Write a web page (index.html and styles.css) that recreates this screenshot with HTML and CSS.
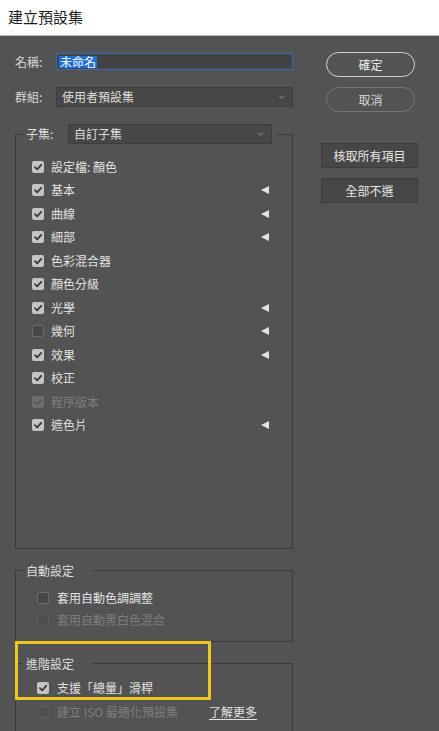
FILE: index.html
```html
<!DOCTYPE html>
<html lang="zh-Hant">
<head>
<meta charset="utf-8">
<title>建立預設集</title>
<link rel="stylesheet" href="styles.css">
</head>
<body>
<div class="titlebar">建立預設集</div>
<div class="main">
  <div class="left">
    <div class="field-row name-row">
      <span class="flabel">名稱:</span>
      <div class="input"><span class="sel">未命名</span></div>
    </div>
    <div class="field-row group-row">
      <span class="flabel">群組:</span>
      <div class="select"><span>使用者預設集</span><svg class="chev" viewBox="0 0 8 5" width="7" height="4"><path d="M1 1 L4 4 L7 1" fill="none" stroke="#a8a8a8" stroke-width="1.1"/></svg></div>
    </div>

    <fieldset class="box subset">
      <legend class="legend-sub"><div class="legend-inner"><span class="llabel">子集:</span><div class="select sub-select"><span>自訂子集</span><svg class="chev" viewBox="0 0 8 5" width="7" height="4"><path d="M1 1 L4 4 L7 1" fill="none" stroke="#a8a8a8" stroke-width="1.1"/></svg></div></div></legend>
      <ul class="items">
        <li class="item"><span class="cb on"><svg viewBox="0 0 12 12"><path d="M3 6.2 L5.2 8.3 L9.2 3.8"/></svg></span><span class="txt">設定檔: 顏色</span></li>
        <li class="item"><span class="cb on"><svg viewBox="0 0 12 12"><path d="M3 6.2 L5.2 8.3 L9.2 3.8"/></svg></span><span class="txt">基本</span><span class="tri"></span></li>
        <li class="item"><span class="cb on"><svg viewBox="0 0 12 12"><path d="M3 6.2 L5.2 8.3 L9.2 3.8"/></svg></span><span class="txt">曲線</span><span class="tri"></span></li>
        <li class="item"><span class="cb on"><svg viewBox="0 0 12 12"><path d="M3 6.2 L5.2 8.3 L9.2 3.8"/></svg></span><span class="txt">細部</span><span class="tri"></span></li>
        <li class="item"><span class="cb on"><svg viewBox="0 0 12 12"><path d="M3 6.2 L5.2 8.3 L9.2 3.8"/></svg></span><span class="txt">色彩混合器</span></li>
        <li class="item"><span class="cb on"><svg viewBox="0 0 12 12"><path d="M3 6.2 L5.2 8.3 L9.2 3.8"/></svg></span><span class="txt">顏色分級</span></li>
        <li class="item"><span class="cb on"><svg viewBox="0 0 12 12"><path d="M3 6.2 L5.2 8.3 L9.2 3.8"/></svg></span><span class="txt">光學</span><span class="tri"></span></li>
        <li class="item"><span class="cb off"></span><span class="txt">幾何</span><span class="tri"></span></li>
        <li class="item"><span class="cb on"><svg viewBox="0 0 12 12"><path d="M3 6.2 L5.2 8.3 L9.2 3.8"/></svg></span><span class="txt">效果</span><span class="tri"></span></li>
        <li class="item"><span class="cb on"><svg viewBox="0 0 12 12"><path d="M3 6.2 L5.2 8.3 L9.2 3.8"/></svg></span><span class="txt">校正</span></li>
        <li class="item disabled"><span class="cb on dis"><svg viewBox="0 0 12 12"><path d="M3 6.2 L5.2 8.3 L9.2 3.8"/></svg></span><span class="txt">程序版本</span></li>
        <li class="item"><span class="cb on"><svg viewBox="0 0 12 12"><path d="M3 6.2 L5.2 8.3 L9.2 3.8"/></svg></span><span class="txt">遮色片</span><span class="tri"></span></li>
      </ul>
    </fieldset>

    <fieldset class="box auto">
      <legend class="legend-text">自動設定</legend>
      <ul class="opts">
        <li class="opt"><span class="cb off"></span><span class="txt">套用自動色調調整</span></li>
        <li class="opt disabled"><span class="cb off dis"></span><span class="txt">套用自動黑白色混合</span></li>
      </ul>
    </fieldset>

    <div class="adv-wrap">
      <fieldset class="box adv">
        <legend class="legend-text">進階設定</legend>
        <ul class="opts adv-opts">
          <li class="opt"><span class="cb on"><svg viewBox="0 0 12 12"><path d="M3 6.2 L5.2 8.3 L9.2 3.8"/></svg></span><span class="txt">支援「總量」滑桿</span></li>
          <li class="opt"><span class="cb off dis"></span><span class="txt dis-txt">建立 ISO 最適化預設集</span><a class="learn" href="#">了解更多</a></li>
        </ul>
      </fieldset>
      <div class="highlight"></div>
    </div>
  </div>

  <div class="right">
    <button class="pill primary">確定</button>
    <button class="pill secondary">取消</button>
    <button class="rect first">核取所有項目</button>
    <button class="rect">全部不選</button>
  </div>
</div>
</body>
</html>
```

FILE: styles.css
```css
* { box-sizing: border-box; }

html, body {
  margin: 0;
  padding: 0;
}

body {
  width: 439px;
  height: 731px;
  overflow: hidden;
  background: #535353;
  font-family: "Noto Sans CJK TC", "Microsoft JhengHei", sans-serif;
  font-size: 12px;
  color: #e0e0e0;
}

.titlebar {
  height: 36px;
  background: #ffffff;
  border-bottom: 1px solid #b9b9b9;
  color: #1c1c1c;
  font-size: 15px;
  line-height: 34px;
  padding-left: 8px;
}

.main {
  display: flex;
  align-items: flex-start;
}

.left {
  width: 278px;
  margin-left: 15px;
  padding-top: 17px;
}

.field-row {
  display: flex;
  align-items: center;
}

.group-row {
  margin-top: 17px;
}

.flabel {
  width: 41px;
  color: #d8d8d8;
  line-height: 16px;
}

.input {
  width: 237px;
  height: 17px;
  background: #434343;
  border: 1px solid #2f6cbd;
  padding-left: 2px;
  display: flex;
  align-items: center;
}

.sel {
  background: #1f6fd6;
  color: #ffffff;
  line-height: 12px;
  height: 12px;
  padding: 0 1px;
  font-size: 12px;
}

.select {
  width: 237px;
  height: 20px;
  background: #474747;
  border: 1px solid #3c3c3c;
  display: flex;
  align-items: center;
  justify-content: space-between;
  padding: 0 7px 0 5px;
  color: #dedede;
  line-height: 16px;
}

.chev { display: block; }

/* fieldsets */
.box {
  margin: 0;
  min-width: 0;
  width: 278px;
  border: 1px solid #3a3a3a;
  padding: 0;
}

.subset {
  margin-top: 17px;
}

.legend-sub {
  margin-left: 7px;
  padding: 0 5px 0 3px;
}

.legend-inner {
  display: flex;
  align-items: center;
  height: 20px;
}

.llabel {
  width: 42px;
  color: #dedede;
  line-height: 16px;
}

.sub-select {
  width: 204px;
  padding-right: 7px;
}

.items {
  list-style: none;
  margin: 0;
  padding: 11px 23px 0 16px;
  height: 404px;
}

.item {
  display: flex;
  align-items: center;
  height: 23.5px;
}

.cb {
  width: 12px;
  height: 12px;
  border-radius: 2px;
  flex: none;
  display: block;
}

.cb svg {
  display: block;
  width: 12px;
  height: 12px;
}

.cb svg path {
  fill: none;
  stroke: #3a3a3a;
  stroke-width: 1.8;
  stroke-linecap: round;
  stroke-linejoin: round;
}

.cb.on {
  background: #c4c4c4;
}

.cb.on.dis {
  background: #6e6e6e;
}

.cb.on.dis svg path {
  stroke: #575757;
}

.cb.off {
  background: #474747;
  border: 1px solid #6c6c6c;
}

.cb.off.dis {
  background: #4f4f4f;
  border: 1px solid #5e5e5e;
}

.txt {
  line-height: 16px;
  color: #e2e2e2;
}

.item .txt {
  margin-left: 7px;
}

.item.disabled .txt,
.opt.disabled .txt,
.dis-txt {
  color: #7e7e7e !important;
}

.tri {
  margin-left: auto;
  width: 0;
  height: 0;
  border-top: 4.5px solid transparent;
  border-bottom: 4.5px solid transparent;
  border-right: 8px solid #e2e2e2;
}

.auto {
  margin-top: 13px;
}

.legend-text {
  margin-left: 7px;
  padding: 0 19px 0 3px;
  line-height: 17px;
  color: #dedede;
}

.opts {
  list-style: none;
  margin: 0;
  padding: 8px 10px 10px 21px;
}

.opt {
  display: flex;
  align-items: center;
  height: 22px;
}

.opt .txt {
  margin-left: 8px;
}

.adv-wrap {
  position: relative;
  margin-top: 13px;
}

.adv-opts {
  padding-top: 4px;
  padding-bottom: 30px;
}

.adv-opts .opt {
  height: 24px;
}

.learn {
  margin-left: 31px;
  color: #e2e2e2;
  text-decoration: underline;
  text-underline-offset: 2px;
  line-height: 16px;
}

.highlight {
  position: absolute;
  left: 0;
  top: -14px;
  width: 196px;
  height: 59px;
  border: 3px solid #efc61c;
  pointer-events: none;
}

/* right column */
.right {
  width: 97px;
  margin-left: 28px;
  padding-top: 16px;
  display: flex;
  flex-direction: column;
  align-items: flex-start;
}

button {
  font-family: inherit;
  font-size: 12px;
  margin: 0;
  padding: 0;
  cursor: default;
}

.pill {
  width: 89px;
  height: 25px;
  margin-left: 5px;
  border-radius: 13px;
  background: transparent;
  line-height: 16px;
}

.pill.primary {
  border: 1.5px solid #d2d2d2;
  color: #ececec;
}

.pill.secondary {
  margin-top: 10px;
  border: 1.5px solid #767676;
  color: #d4d4d4;
}

.rect {
  width: 97px;
  height: 25px;
  margin-top: 10px;
  background: #474747;
  border: 1px solid #3c3c3c;
  color: #e6e6e6;
  line-height: 16px;
}

.rect.first {
  margin-top: 31px;
}
```
